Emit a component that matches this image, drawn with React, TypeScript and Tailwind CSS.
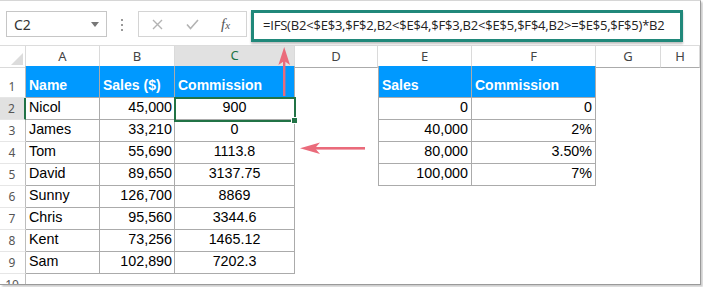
import type { ReactNode } from 'react'

const COLS = 'grid grid-cols-[26px_74px_75px_120px_83px_94px_124px_65px_39px]'
const LINE = 'border-[#ababab]'

const people: [string, string, string][] = [
    ['Nicol', '45,000', '900'],
    ['James', '33,210', '0'],
    ['Tom', '55,690', '1113.8'],
    ['David', '89,650', '3137.75'],
    ['Sunny', '126,700', '8869'],
    ['Chris', '95,560', '3344.6'],
    ['Kent', '73,256', '1465.12'],
    ['Sam', '102,890', '7202.3'],
]

const rates: [string, string][] = [
    ['0', '0'],
    ['40,000', '2%'],
    ['80,000', '3.50%'],
    ['100,000', '7%'],
]

function Cell({ children, className = '' }: { children?: ReactNode; className?: string }) {
    return <div className={`flex items-end overflow-hidden whitespace-nowrap pb-[1px] ${className}`}>{children}</div>
}

function RowNum({ n, active = false }: { n: number; active?: boolean }) {
    return (
        <Cell
            className={`justify-center pr-[1px] font-['Noto_Sans',sans-serif] text-[12px] text-[#555] border-b border-[#e6e6e6] ${
                active ? 'bg-[#e1e1e1] border-r-2 border-r-[#217346]' : 'border-r border-r-[#bdbdbd]'
            }`}
        >
            <span className="leading-[18px]">{n}</span>
        </Cell>
    )
}

function Toolbar() {
    return (
        <div className="flex h-[45px] items-start border-b border-[#dcdcdc] font-['Noto_Sans',sans-serif]">
            {/* name box */}
            <div className="ml-[6px] mt-[10px] flex h-[26px] w-[101px] items-center justify-between border border-[#c6c6c6] pl-[7px] pr-[7px]">
                <span className="text-[14px] text-[#333]">C2</span>
                <span className="h-0 w-0 border-x-[4px] border-t-[5px] border-x-transparent border-t-[#777]" />
            </div>
            <div className="ml-[14px] mt-[18px] flex flex-col gap-[3px]">
                <span className="h-[2px] w-[2px] bg-[#999]" />
                <span className="h-[2px] w-[2px] bg-[#999]" />
                <span className="h-[2px] w-[2px] bg-[#999]" />
            </div>
            {/* cancel / enter / fx */}
            <div className="ml-[15px] mt-[10px] flex h-[26px] w-[109px] items-center border border-[#d4d4d4]">
                <svg className="ml-[13px]" width="11" height="11" viewBox="0 0 11 11">
                    <path d="M1 1L10 10M10 1L1 10" stroke="#b3b3b3" strokeWidth="1.4" />
                </svg>
                <svg className="ml-[23px]" width="13" height="11" viewBox="0 0 13 11">
                    <path d="M1 5.5L4.5 9.5L12 1" stroke="#b3b3b3" strokeWidth="1.6" fill="none" />
                </svg>
                <span className="ml-[22px] font-['Liberation_Serif',serif] text-[15px] italic text-[#555]">
                    f<span className="text-[11px]">x</span>
                </span>
            </div>
            {/* formula bar */}
            <div className="ml-[4px] mt-[9px] flex h-[32px] w-[432px] items-center border-[3px] border-[#20887a] bg-white pl-[9px] shadow-[0_2px_2px_rgba(0,0,0,0.25)]">
                <span className="font-['Open_Sans',sans-serif] text-[13px] tracking-[-0.2px] text-[#222]">
                    =IFS(B2&lt;$E$3,$F$2,B2&lt;$E$4,$F$3,B2&lt;$E$5,$F$4,B2&gt;=$E$5,$F$5)*B2
                </span>
            </div>
        </div>
    )
}

function ColumnHeaders() {
    const letters = ['A', 'B', 'C', 'D', 'E', 'F', 'G', 'H']
    return (
        <div className={`${COLS} h-[20px] font-['Noto_Sans',sans-serif] text-[13px] text-[#444]`}>
            <div className="flex items-end justify-end border-r border-b border-[#dadada] pb-[2px] pr-[2px]">
                <svg width="12" height="12" viewBox="0 0 12 12">
                    <path d="M12 0V12H0Z" fill="#dcdcdc" />
                </svg>
            </div>
            {letters.map((l) =>
                l === 'C' ? (
                    <div key={l} className="flex items-center justify-center border-r border-[#dadada] border-b-2 border-b-[#217346] bg-[#e1e1e1] text-[#217346]">
                        {l}
                    </div>
                ) : (
                    <div key={l} className="flex items-center justify-center border-r border-[#dadada] border-b border-b-[#ababab]">
                        {l}
                    </div>
                )
            )}
        </div>
    )
}

export default function App() {
    const sans = "font-['Liberation_Sans',Arial,sans-serif] text-[14.3px] text-black"
    return (
        <div className="relative h-[287px] w-[703px] overflow-hidden bg-white">
            <div className="h-[285px] w-[701px] overflow-hidden border-t border-r border-b border-t-[#d6d6d6] border-r-[#9a9a9a] border-b-[#9a9a9a] bg-white shadow-[2px_2px_2px_rgba(0,0,0,0.2)]">
                <Toolbar />
                <ColumnHeaders />

                {/* row 1: table headings */}
                <div className={`${COLS} h-[32px] ${sans}`}>
                    <RowNum n={1} />
                    <Cell className={`bg-[#0099ff] pl-[3px] font-bold text-white text-[14px] border-r border-b ${LINE}`}>Name</Cell>
                    <Cell className={`bg-[#0099ff] pl-[3px] font-bold text-white text-[14px] border-r border-b ${LINE}`}>Sales ($)</Cell>
                    <Cell className={`bg-[#0099ff] pl-[3px] font-bold text-white text-[14px] border-r border-b ${LINE}`}>Commission</Cell>
                    <Cell />
                    <Cell className={`bg-[#0099ff] pl-[3px] font-bold text-white text-[14px] border-l border-r border-b ${LINE}`}>Sales</Cell>
                    <Cell className={`bg-[#0099ff] pl-[3px] font-bold text-white text-[14px] border-r border-b ${LINE}`}>Commission</Cell>
                    <Cell />
                    <Cell />
                </div>

                {people.map(([name, sales, comm], i) => {
                    const rate = rates[i]
                    return (
                        <div key={name} className={`${COLS} h-[22px] ${sans}`}>
                            <RowNum n={i + 2} active={i === 0} />
                            <Cell className={`pl-[3px] border-r border-b ${LINE}`}>{name}</Cell>
                            <Cell className={`justify-end pr-[2px] border-r border-b ${LINE}`}>{sales}</Cell>
                            <Cell className={`justify-center border-r border-b ${LINE}`}>{comm}</Cell>
                            <Cell />
                            {rate ? (
                                <>
                                    <Cell className={`justify-end pr-[3px] border-l border-r border-b ${LINE}`}>{rate[0]}</Cell>
                                    <Cell className={`justify-end pr-[3px] border-r border-b ${LINE}`}>{rate[1]}</Cell>
                                </>
                            ) : (
                                <>
                                    <Cell />
                                    <Cell />
                                </>
                            )}
                            <Cell />
                            <Cell />
                        </div>
                    )
                })}

                <div className={`${COLS} h-[22px]`}>
                    <RowNum n={10} />
                </div>
            </div>

            {/* active cell C2 */}
            <div className="pointer-events-none absolute left-[174px] top-[97px] h-[25px] w-[122px] border-2 border-[#217346]" />
            <div className="pointer-events-none absolute left-[291px] top-[117px] h-[7px] w-[7px] border border-white bg-[#217346]" />

            {/* callout arrows */}
            <svg className="pointer-events-none absolute left-0 top-0" width="703" height="287" viewBox="0 0 703 287">
                <g fill="#ea6b7b" stroke="none">
                    <rect x="283" y="58" width="2.4" height="38" />
                    <path d="M284.2 47 L290 65 L284.2 61 L278.4 65 Z" />
                    <rect x="312" y="147" width="53" height="2.6" />
                    <path d="M300 148.3 L320 142.5 L315 148.3 L320 154 Z" />
                </g>
            </svg>
        </div>
    )
}
